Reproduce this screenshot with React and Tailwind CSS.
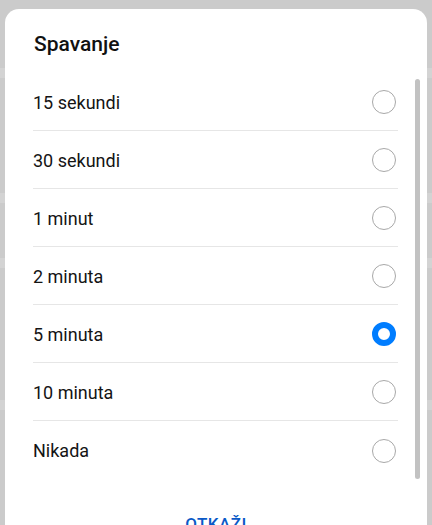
import React from 'react';

const options = ['15 sekundi', '30 sekundi', '1 minut', '2 minuta', '5 minuta', '10 minuta', 'Nikada'];

const Radio = ({ checked }) =>
  checked ? (
    <span className="block h-[24px] w-[24px] rounded-full border-[6px] border-[#007dff] bg-white" />
  ) : (
    <span className="block h-[24px] w-[24px] rounded-full border-[1.5px] border-[#a8a8a8] bg-white" />
  );

export default function App() {
  return (
    <div
      className="relative h-[525px] w-[432px] overflow-hidden bg-[#cbcbcb]"
      style={{ fontFamily: 'Roboto, "Noto Sans", sans-serif' }}
    >
      {/* dimmed list rows behind the dialog */}
      <div className="absolute left-0 right-0 top-[68px] h-[10px] bg-[#d3d3d3]" />
      <div className="absolute left-0 right-0 top-[193px] h-[10px] bg-[#d3d3d3]" />
      <div className="absolute left-0 right-0 top-[258px] h-[10px] bg-[#d3d3d3]" />
      <div className="absolute left-0 right-0 top-[400px] h-[10px] bg-[#d3d3d3]" />

      <div className="relative mx-[5px] mt-[9px] rounded-[14px] bg-white">
        <div className="flex h-[64px] items-center pl-[29px] pt-[8px] text-[21px] font-medium text-[#111]">
          Spavanje
        </div>

        <div className="relative pl-[28px] pr-[29px]">
          {options.map((label, i) => (
            <div
              key={label}
              className={
                'flex h-[58px] items-center justify-between pr-[2px] pt-[1px] ' +
                (i < options.length - 1 ? 'border-b border-[#e6e6e6]' : '')
              }
            >
              <span className="text-[18px] text-[#141414]">{label}</span>
              <Radio checked={label === '5 minuta'} />
            </div>
          ))}
          <div className="absolute right-[7px] top-[6px] h-[400px] w-[5px] rounded-full bg-[#c2c2c2]" />
        </div>

        <div className="flex h-[60px] items-end justify-center pb-[2px]">
          <span className="text-[17px] font-medium tracking-wide text-[#0a59c7]">OTKAŽI</span>
        </div>
      </div>
    </div>
  );
}
